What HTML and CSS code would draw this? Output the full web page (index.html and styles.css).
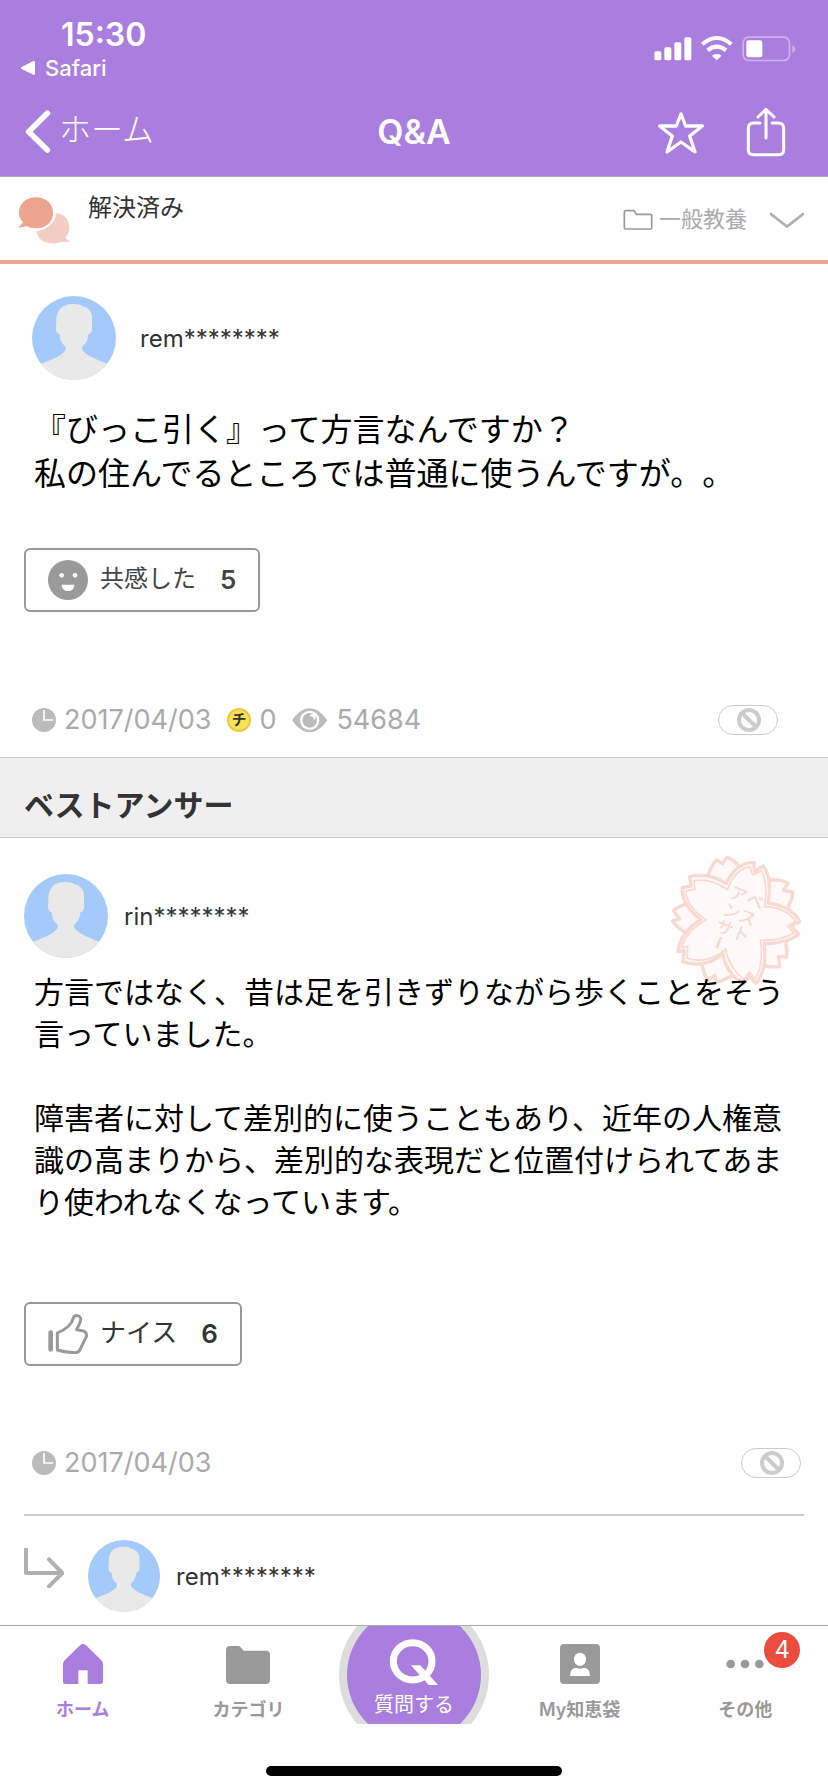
FILE: index.html
```html
<!DOCTYPE html>
<html lang="ja">
<head>
<meta charset="utf-8">
<meta name="viewport" content="width=device-width, initial-scale=1">
<title>Q&amp;A</title>
<link rel="stylesheet" href="styles.css">
</head>
<body>
<svg class="defs" aria-hidden="true">
  <symbol id="avatar" viewBox="96 78 252 252">
    <clipPath id="round"><circle cx="222" cy="204" r="126"/></clipPath>
    <g clip-path="url(#round)">
      <path fill="#a4cafc" d="M96 78h252v252H96z"/>
      <path fill="#e9e9e9" d="M218 102C230 101 241 103 246 108C262 111 275 122 276 140V162C278 178 275 192 265 193C264 210 258 220 247 230Q244 237 249 243C262 258 290 269 324 282L340 332H104L120 282C158 269 182 258 195 243Q199 237 196 229C185 221 180 211 179 193C168 192 166 175 169 163C166 120 185 103 218 102Z"/>
    </g>
  </symbol>
  <symbol id="clock" viewBox="0 0 72 72">
    <circle cx="36" cy="36" r="36" fill="#bbb"/>
    <path d="M36 6V36H63" fill="none" stroke="#fff" stroke-width="5"/>
  </symbol>
  <symbol id="ban" viewBox="0 0 72 72">
    <g fill="none" stroke="#ccc" stroke-width="12"><circle cx="36" cy="36" r="30"/><path d="M15 15 57 57"/></g>
  </symbol>
</svg>
<div class="app">
  <header class="header">
    <div class="status">
      <div class="status-left">
        <div class="time">15:30</div>
        <a class="return" href="#"><svg width="14" height="14" viewBox="0 0 42 42"><path fill="#fff" d="M2 18 37 0Q42-1 42 4V38Q42 43 37 41L2 24Q-2 21 2 18Z"/></svg>Safari</a>
      </div>
      <svg class="signals" width="142" height="26" viewBox="716 110 426 78" aria-label="電波 Wi-Fi バッテリー">
        <g fill="#fff"><rect x="717" y="156" width="21" height="27" rx="5"/><rect x="747" y="144" width="21" height="39" rx="5"/><rect x="777" y="129" width="21" height="54" rx="5"/><rect x="807" y="114" width="21" height="69" rx="5"/>
        <path d="M904 183 891 171Q890 169 892 168Q904 160 917 168Q919 169 917 171Z"/><rect x="993" y="123" width="48" height="51" rx="7"/></g>
        <path d="M861 135Q904 97 948 135M877 153Q904 131 932 153" fill="none" stroke="#fff" stroke-width="12"/>
        <rect x="983.500" y="113.500" width="139" height="70" rx="17" fill="none" stroke="#cdb3ed" stroke-width="5"/>
        <path fill="#cdb3ed" d="M1131 137Q1140 141 1140 149Q1140 157 1131 161Z"/>
      </svg>
    </div>
    <nav class="navbar">
      <a class="back" href="#"><svg width="26" height="44" viewBox="75 331 78 132"><path d="M142 341 86 396 142 451" fill="none" stroke="#fff" stroke-width="17" stroke-linecap="round" stroke-linejoin="round"/></svg><span>ホーム</span></a>
      <h1 class="title">Q&amp;A</h1>
      <div class="actions">
        <button class="icon-btn" aria-label="お気に入り"><svg width="50" height="46" viewBox="723 328 150 138"><path d="M798 343 812 379H862L824 409 840 457 798 427 756 457 772 409 734 379H784Z" fill="none" stroke="#fff" stroke-width="10" stroke-linejoin="round"/></svg></button>
        <button class="icon-btn" aria-label="共有"><svg width="40" height="50" viewBox="993 318 120 150"><path d="M1035 366H1016Q1000 366 1000 382V446Q1000 461 1016 461H1090Q1106 461 1106 446V382Q1106 366 1090 366H1071M1053 411V327M1029 348 1053 325 1077 348" fill="none" stroke="#fff" stroke-width="9" stroke-linecap="round" stroke-linejoin="round"/></svg></button>
      </div>
    </nav>
  </header>
  <main class="content">
    <section class="state">
      <svg width="52" height="47" viewBox="54 590 156 141"><path fill="#f3cdc3" d="M169 638C195 641 208 660 208 683C208 696 203 704 196 712Q201 719 210 722Q198 727 185 724Q173 730 157 729C128 728 112 713 109 692C143 690 165 667 169 638Z"/><path fill="#eea590" d="M108 591C139 591 159 611 159 637C159 664 139 684 108 684Q91 684 78 677Q67 682 54 681Q64 676 69 665Q57 654 57 637C57 611 77 591 108 591Z"/></svg>
      <p class="state-text">解決済み</p>
      <button class="category"><svg width="30" height="22" viewBox="620 625 90 66"><path d="M624 634Q624 630 628 630H650Q653 630 655 633L660 641H703Q706 641 706 644V682Q706 685 703 685H628Q624 685 624 682Z" fill="none" stroke="#999" stroke-width="5"/></svg><span>一般教養</span><svg class="chev" width="34" height="18" viewBox="1065 632 102 54"><path d="M1065 639 1116 679 1167 639" fill="none" stroke="#b0b0b0" stroke-width="8"/></svg></button>
    </section>
    <article class="question">
      <div class="user"><svg width="84" height="84"><use href="#avatar"/></svg><span>rem********</span></div>
      <p class="q-text">『びっこ引く』って方言なんですか？<br>私の住んでるところでは普通に使うんですが。。</p>
      <button class="react"><svg width="40" height="40" viewBox="144 870 120 120"><circle cx="204" cy="930" r="60" fill="#999"/><circle cx="185" cy="916" r="7" fill="#fff"/><circle cx="225" cy="916" r="7" fill="#fff"/><path fill="#fff" d="M185 944H223Q222 963 204 963Q186 963 185 944Z"/></svg><span>共感した</span><b>5</b></button>
      <div class="meta">
        <svg width="24" height="24"><use href="#clock"/></svg><time>2017/04/03</time>
        <svg class="coin" width="24" height="24" viewBox="0 0 72 72"><circle cx="36" cy="36" r="33" fill="#fbe158" stroke="#ecc937" stroke-width="6"/><text class="coin-text" x="36" y="52" text-anchor="middle">チ</text></svg><span>0</span>
        <svg class="eye" width="36" height="24" viewBox="879 230 108 72"><path fill="#bbb" d="M879 267Q904 231 932 231Q960 231 985 267Q960 303 932 303Q904 303 879 267Z"/><circle cx="932" cy="267" r="29" fill="#fff"/><circle cx="932" cy="267" r="22" fill="#bbb"/><circle cx="941" cy="257" r="9" fill="#fff"/><circle cx="935" cy="264" r="9" fill="#bbb"/></svg><span>54684</span>
        <button class="report" aria-label="違反報告"><svg width="24" height="24"><use href="#ban"/></svg></button>
      </div>
    </article>
    <h2 class="section-title">ベストアンサー</h2>
    <article class="answer">
      <svg class="stamp" width="132" height="134" viewBox="150 102 396 402">
        <g fill="#fffaf9" stroke="#f9d9d0" stroke-width="10" stroke-linejoin="round">
          <path d="M265 165Q272 138 290 120L308 131 321 112Q340 118 355 137L455 180Q482 177 504 190L490 211 518 216Q517 238 507 255L498 375Q504 395 498 412L476 409 479 440Q458 442 438 438L325 472Q304 485 285 486L285 465 264 481Q252 465 247 437L192 335Q170 322 158 303L179 296 160 272Q180 256 205 250Z"/>
          <path d="M318 191C335 155 365 124 402 128Q402 142 404 155Q416 147 430 138C449 165 453 205 444 250C485 252 525 275 539 305L514 318 536 343C510 365 475 370 432 371C440 420 430 465 408 490L388 468 370 492C335 470 315 440 308 401C280 430 230 440 188 425L193 392 174 395C178 355 205 320 243 299C205 270 185 235 187 203L213 198 209 170C250 160 290 170 318 191Z"/>
        </g>
        <path fill="none" stroke="#f9d9d0" stroke-width="5" d="M322 209C339 167 363 143 391 140Q392 157 400 165Q414 158 425 152C440 182 440 220 434 260C475 260 510 278 526 303L503 318 522 339C495 357 460 361 421 361C429 410 421 455 406 476L388 456 371 478C343 457 325 425 316 388C280 420 235 427 202 415L203 379 186 383C190 352 220 320 258 299C218 272 198 241 198 213L224 208 222 182C258 176 290 187 322 209Z"/>
        <g class="stamp-text" text-anchor="middle" transform="rotate(22 350 300)">
          <text x="380" y="246">ベ</text><text x="378" y="300">ス</text><text x="378" y="353">ト</text>
          <text x="326" y="246">ア</text><text x="326" y="300">ン</text><text x="326" y="353">サ</text><path d="M326 365V401"/>
        </g>
      </svg>
      <div class="user"><svg width="84" height="84"><use href="#avatar"/></svg><span>rin********</span></div>
      <p class="a-text">方言ではなく、昔は足を引きずりながら歩くことをそう言っていました。<br><br>障害者に対して差別的に使うこともあり、近年の人権意識の高まりから、差別的な表現だと位置付けられてあまり使われなくなっています。</p>
      <button class="react react-dark"><svg width="40" height="40" viewBox="144 101 120 120"><path d="M152 157V207" stroke="#999" stroke-width="14" stroke-linecap="round"/><path d="M172 158C190 150 214 138 219 116Q223 103 233 106Q245 109 241 124L230 148 247 151Q262 155 259 169L240 208Q236 217 226 217Q195 216 172 209Z" fill="none" stroke="#999" stroke-width="9" stroke-linejoin="round"/></svg><span>ナイス</span><b>6</b></button>
      <div class="meta">
        <svg width="24" height="24"><use href="#clock"/></svg><time>2017/04/03</time>
        <button class="report" aria-label="違反報告"><svg width="24" height="24"><use href="#ban"/></svg></button>
      </div>
    </article>
    <section class="reply">
      <svg class="reply-arrow" width="40" height="40" viewBox="72 804 120 120"><path d="M78 808V879H186M147 838 187 879 147 919" fill="none" stroke="#b0b0b0" stroke-width="12" stroke-linecap="round" stroke-linejoin="round"/></svg>
      <div class="user user-small"><svg width="72" height="72"><use href="#avatar"/></svg><span>rem********</span></div>
    </section>
  </main>
  <footer class="footer">
    <nav class="tabs">
      <a class="tab active" href="#"><svg width="40" height="40" viewBox="186 132 120 120"><path fill="currentColor" d="M237 136Q246 128 255 136L301 181Q306 186 306 192V245Q306 252 299 252H260V211H232V252H193Q186 252 186 245V192Q186 186 191 181Z"/></svg><span>ホーム</span></a>
      <a class="tab" href="#"><svg width="44" height="40" viewBox="678 132 132 120"><path fill="currentColor" d="M678 150Q678 138 690 138H715Q719 138 722 142L731 152H798Q810 152 810 164V240Q810 252 798 252H690Q678 252 678 240Z"/></svg><span>カテゴリ</span></a>
      <a class="tab ask" href="#"><svg class="ask-disc" width="150" height="98" viewBox="-75 -49 150 98"><circle r="75" cy="0" fill="#ddd"/><circle r="67" cy="0" fill="#a97edf"/></svg><svg class="ask-q" width="50" height="46" viewBox="1168 115 150 138"><ellipse cx="1239" cy="182" rx="58" ry="56" fill="none" stroke="#fff" stroke-width="21"/><path fill="#fff" d="M1234 194H1262L1316 254H1288Z"/></svg><span>質問する</span></a>
      <a class="tab" href="#"><svg width="40" height="40" viewBox="435 132 120 120"><rect x="435" y="132" width="120" height="120" rx="12" fill="currentColor"/><ellipse cx="495" cy="178" rx="18" ry="20" fill="#fff"/><path fill="#fff" d="M465 228Q465 203 485 203Q495 208 505 203Q525 203 525 228Z"/></svg><span>My知恵袋</span></a>
      <a class="tab" href="#"><svg width="40" height="40" viewBox="930 132 120 120"><g fill="currentColor"><circle cx="947" cy="192" r="13"/><circle cx="990" cy="192" r="13"/><circle cx="1033" cy="192" r="13"/></g></svg><span>その他</span><b class="badge">4</b></a>
    </nav>
    <div class="indicator"></div>
  </footer>
</div>
</body>
</html>
```
FILE: styles.css
```css
* { box-sizing: border-box; }
body, h1, h2, p { margin: 0; }
body {
  background: #fff;
  color: #333;
  font-family: Inter, "Noto Sans CJK JP", sans-serif;
  text-spacing-trim: space-all;
}
button { padding: 0; border: 0; background: none; color: inherit; font: inherit; }
a { color: inherit; text-decoration: none; }
svg { display: block; flex: none; }
.defs { position: absolute; width: 0; height: 0; }
.app { display: flex; flex-direction: column; height: 100vh; }

.header { flex: none; background: #a97edf; color: #fff; border-bottom: 1px solid #aaa; }
.status { display: flex; justify-content: space-between; padding: 16px 32px 0 21px; height: 88px; }
.time { padding-left: 40px; font-size: 32px; font-weight: 600; line-height: 38px; }
.return { display: flex; align-items: center; gap: 10px; font-size: 22px; font-weight: 500; line-height: 28px; }
.signals { margin-top: 20px; }
.navbar { display: grid; grid-template-columns: 1fr auto 1fr; align-items: center; height: 88px; padding: 0 25px; }
.back { display: flex; align-items: center; gap: 8px; font-size: 32px; font-weight: 300; line-height: 40px; }
.back span { padding-bottom: 4px; }
.title { font-size: 34px; font-weight: 600; line-height: 40px; }
.actions { display: flex; align-items: center; justify-content: flex-end; gap: 40px; padding-right: 17px; }

.content { flex: 1; min-height: 0; overflow: hidden; }
.state { display: flex; height: 87px; padding: 20px 24px 0 18px; border-bottom: 4px solid #eea590; }
.state-text { flex: 1; padding-left: 18px; font-size: 24px; line-height: 22px; }
.category { display: flex; align-items: center; align-self: flex-start; gap: 6px; height: 46px; color: #aaa; font-size: 22px; line-height: 30px; }
.category span { padding-bottom: 2px; }
.chev { margin-left: 17px; }

.user { display: flex; align-items: center; gap: 24px; font-size: 24px; }
.question { padding: 32px 50px 22px 24px; }
.question .user { padding-left: 8px; }
.q-text { padding: 28px 0 0 10px; color: #000; font-size: 32px; line-height: 44px; }
.react { display: flex; align-items: center; height: 64px; padding: 0 22px; border: 2px solid #999; border-radius: 6px; color: #444; font-size: 24px; line-height: 32px; }
.react span { margin: 0 24px 2px 12px; }
.react b { font-size: 26px; font-weight: 600; }
.react-dark { color: #333; font-size: 26px; }
.question .react { margin-top: 52px; }
.meta { display: flex; align-items: center; gap: 8px; height: 30px; padding-left: 8px; color: #aaa; font-size: 27px; line-height: 30px; }
.question .meta { margin-top: 93px; }
.coin { margin-left: 8px; }
.coin-text { font-family: "Noto Sans CJK JP", sans-serif; font-size: 44px; font-weight: 700; fill: #333; }
.eye { margin-left: 8px; }
.report { display: flex; align-items: center; justify-content: flex-end; width: 60px; height: 30px; margin-left: auto; padding-right: 16px; border: 1px solid #ccc; border-radius: 15px; }

.section-title { height: 81px; padding: 27px 24px 0; border: 1px solid #ccc; border-width: 1px 0; background: #efefef; font-size: 30px; line-height: 40px; }

.answer { position: relative; margin: 0 24px; padding: 36px 0; border-bottom: 2px solid #ccc; }
.answer .user { gap: 16px; }
.stamp { position: absolute; top: 16px; right: 2px; }
.stamp-text { font-family: "Noto Sans CJK JP", sans-serif; font-size: 52px; font-weight: 500; fill: #f9d9d0; stroke: none; }
.stamp-text path { stroke: #f9d9d0; stroke-width: 8px; }
.a-text { position: relative; padding: 13px 10px 0; color: #000; font-size: 30px; line-height: 42px; }
.answer .react { margin-top: 79px; }
.answer .meta { margin-top: 82px; padding-right: 3px; }

.reply { display: flex; gap: 24px; padding: 24px; }
.reply-arrow { margin-top: 8px; }
.user-small { gap: 16px; }

.footer { flex: none; background: #fff; border-top: 1px solid #aaa; }
.tabs { display: grid; grid-template-columns: repeat(5, 1fr); height: 98px; }
.tab { position: relative; display: flex; flex-direction: column; align-items: center; gap: 13px; padding-top: 18px; color: #999; font-size: 18px; font-weight: 600; line-height: 26px; }
.active { color: #a97edf; }
.ask { gap: 7px; padding-top: 13px; color: #fff; font-size: 20px; font-weight: 400; }
.ask-disc { position: absolute; top: 0; left: 50%; margin-left: -75px; }
.ask-q, .ask span { position: relative; }
.badge { position: absolute; top: 6px; left: 50%; width: 36px; height: 36px; margin-left: 19px; border-radius: 50%; background: #ea4d3d; color: #fff; font-size: 24px; font-weight: 400; line-height: 36px; text-align: center; }
.indicator { width: 296px; height: 10px; margin: 42px auto 16px; border-radius: 5px; background: #000; }
```
